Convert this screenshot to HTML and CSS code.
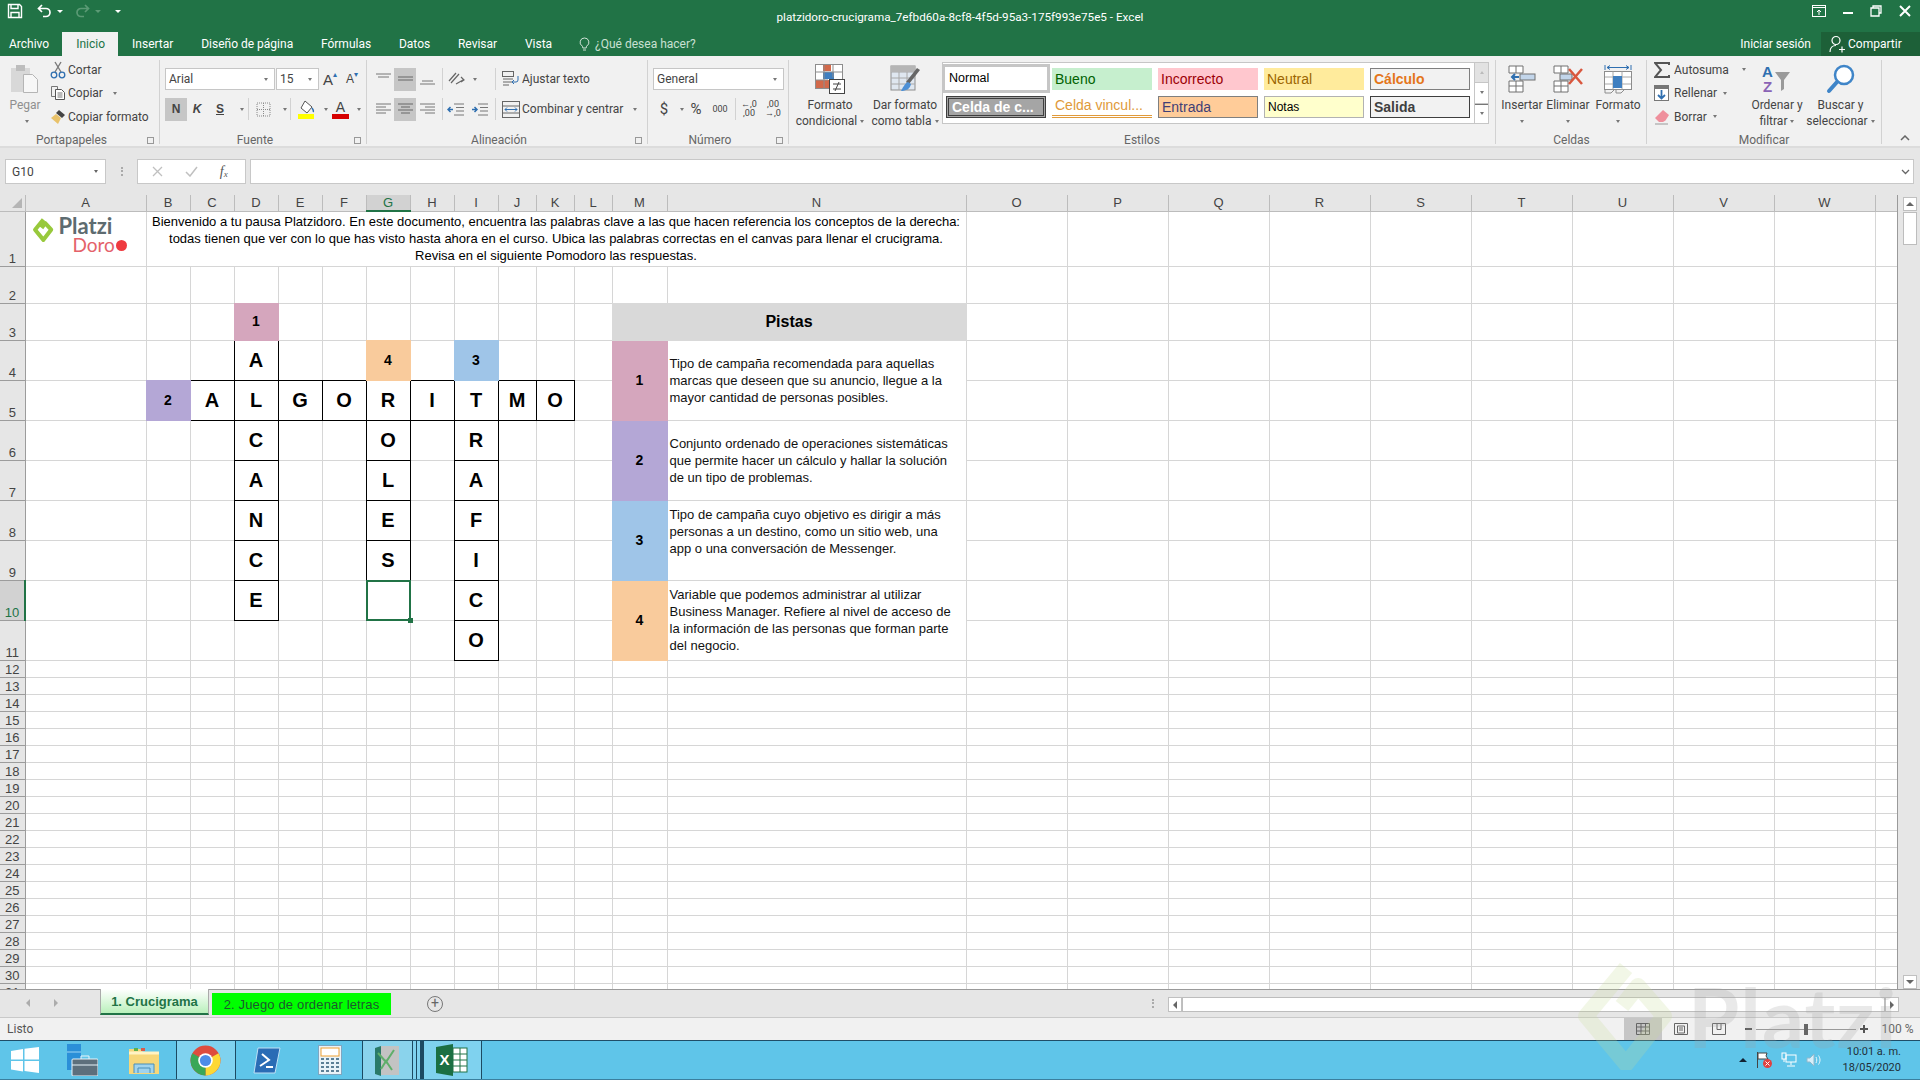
FILE: index.html
```html
<!DOCTYPE html>
<html lang="es">
<head>
<meta charset="utf-8">
<title>platzidoro-crucigrama - Excel</title>
<link rel="stylesheet" href="styles.css">
</head>
<body>
<div class="app">
  <header class="titlebar">
    <div class="qat">
      <svg class="ic-save" width="16" height="16" viewBox="0 0 16 16"><path d="M1.500 1.500h11l2 2v11h-13z" fill="none" stroke="#fff" stroke-width="1.400"/><path d="M4 1.500v4h7v-4M4 14.500v-5h8v5" fill="none" stroke="#fff" stroke-width="1.400"/></svg>
      <svg class="ic-undo" width="15" height="14" viewBox="0 0 15 14"><path d="M5 1L1.500 4.500 5 8M2 4.500h7a4 4 0 0 1 0 8H6" fill="none" stroke="#fff" stroke-width="1.700"/></svg>
      <span class="qcaret"></span>
      <svg class="ic-redo" width="15" height="14" viewBox="0 0 15 14"><path d="M10 1l3.500 3.500L10 8M13 4.500H6a4 4 0 0 0 0 8h3" fill="none" stroke="#5b9a75" stroke-width="1.700"/></svg>
      <span class="qcaret dim"></span>
      <span class="qcaret more"></span>
    </div>
    <div class="doc-title">platzidoro-crucigrama_7efbd60a-8cf8-4f5d-95a3-175f993e75e5 - Excel</div>
    <div class="winctl">
      <svg width="14" height="12" viewBox="0 0 14 12"><rect x=".5" y=".5" width="13" height="11" fill="none" stroke="#fff"/><path d="M1 2.500h12M7 10V5M5 7l2-2 2 2" fill="none" stroke="#fff"/></svg>
      <svg width="10" height="12" viewBox="0 0 10 12"><path d="M0 8h10" stroke="#fff" stroke-width="2"/></svg>
      <svg width="12" height="12" viewBox="0 0 12 12"><path d="M3 3V1h8v7H9M1 3h8v8H1z" fill="none" stroke="#fff" stroke-width="1.300"/></svg>
      <svg width="12" height="12" viewBox="0 0 12 12"><path d="M1 1l10 10M11 1L1 11" stroke="#fff" stroke-width="2"/></svg>
    </div>
  </header>

  <nav class="tabsrow">
    <span class="tab file">Archivo</span>
    <span class="tab active">Inicio</span>
    <span class="tab">Insertar</span>
    <span class="tab">Diseño de página</span>
    <span class="tab">Fórmulas</span>
    <span class="tab">Datos</span>
    <span class="tab">Revisar</span>
    <span class="tab">Vista</span>
    <span class="tell">
      <svg width="11" height="15" viewBox="0 0 11 15"><path d="M5.500 1a4.300 4.300 0 0 0-2.300 8c.500.400.500 1 .6 2h3.400c.100-1 .100-1.600.6-2a4.300 4.300 0 0 0-2.300-8zM4 13h3" fill="none" stroke="#cfe2d6"/></svg>
      ¿Qué desea hacer?
    </span>
    <span class="signin">Iniciar sesión</span>
    <span class="share">
      <svg width="16" height="18" viewBox="0 0 16 18"><circle cx="7" cy="5.500" r="4" fill="none" stroke="#fff" stroke-width="1.200"/><path d="M1 17c0-4 2.500-6.500 6-6.500M10 14.500h6M13 11.500v6" fill="none" stroke="#fff" stroke-width="1.200"/></svg>
      Compartir
    </span>
  </nav>

  <section class="ribbon">
    <div class="group g-clip">
      <div class="g-body">
        <div class="big w50 faded">
          <svg class="big-ic" width="30" height="30" viewBox="0 0 30 30"><rect x="1" y="4" width="19" height="24" fill="#d8d8d8"/><rect x="6" y="1" width="9" height="6" fill="#bdbdbd"/><path d="M13.500 10.500h9l5 5v13h-14z" fill="#f7f7f7" stroke="#b5b5b5"/></svg>
          <span class="bl">Pegar</span>
          <span class="bl"><i class="caret"></i></span>
        </div>
        <div class="stack3">
          <div class="srow"><svg width="16" height="18" viewBox="0 0 16 18"><path d="M5 1l6 10M11 1L5 11" stroke="#7a7a7a" stroke-width="1.400" fill="none"/><circle cx="4" cy="14" r="2.800" fill="none" stroke="#2f6fb0" stroke-width="1.300"/><circle cx="12" cy="14" r="2.800" fill="none" stroke="#2f6fb0" stroke-width="1.300"/></svg>Cortar</div>
          <div class="srow"><svg width="16" height="16" viewBox="0 0 16 16"><path d="M1.500 1.500h6v3M1.500 1.500v10h4" fill="none" stroke="#777"/><path d="M5.500 4.500h6l3 3v7h-9z" fill="#fff" stroke="#555"/><path d="M7.500 8h5M7.500 10h5M7.500 12h5" stroke="#777"/></svg>Copiar<i class="caret sp"></i></div>
          <div class="srow"><svg width="16" height="16" viewBox="0 0 16 16"><path d="M9 1l6 5-3 3-6-5z" fill="#444"/><path d="M6 5l5 4-3 6-7-6z" fill="#e9c26a"/></svg>Copiar formato</div>
        </div>
      </div>
      <div class="g-label lau">Portapapeles<i class="launch"></i></div>
    </div>

    <div class="group g-font">
      <div class="g-body">
        <div class="stack2">
          <div class="row">
            <div class="combo w110">Arial<i class="caret"></i></div>
            <div class="combo w43">15<i class="caret"></i></div>
            <span class="tb w22 glyph">A<sup>▴</sup></span>
            <span class="tb w22 glyph small">A<sup>▾</sup></span>
          </div>
          <div class="row">
            <span class="tb w22 on b">N</span>
            <span class="tb w20 b it">K</span>
            <span class="tb w26 b un">S</span>
            <span class="tb w15"><i class="caret"></i></span>
            <i class="sep"></i>
            <span class="tb w28"><svg width="15" height="15" viewBox="0 0 15 15"><path d="M1 1h13v13H1zM7.500 1v13M1 7.500h13" fill="none" stroke="#8a8a8a" stroke-dasharray="1 1"/></svg></span>
            <span class="tb w13"><i class="caret"></i></span>
            <i class="sep"></i>
            <span class="tb w30"><svg width="17" height="19" viewBox="0 0 17 19"><path d="M7 1l7 6-5 6-6-5z" fill="#fff" stroke="#555"/><path d="M14 8c1.500 2 2 3 1 4" stroke="#2f6fb0" stroke-width="1.500" fill="none"/><rect y="14" width="16" height="5" fill="#ffff00"/></svg></span>
            <span class="tb w6"><i class="caret"></i></span>
            <span class="tb w26"><svg width="17" height="19" viewBox="0 0 17 19"><text x="8.500" y="12" font-family="Liberation Sans" font-size="14" fill="#444" text-anchor="middle">A</text><rect y="14" width="17" height="5" fill="#d60000"/></svg></span>
            <span class="tb w8"><i class="caret"></i></span>
          </div>
        </div>
      </div>
      <div class="g-label lau">Fuente<i class="launch"></i></div>
    </div>

    <div class="group g-align">
      <div class="g-body">
        <div class="stack2">
          <div class="row">
            <span class="tb w22"><svg width="15" height="12" viewBox="0 0 15 12"><path d="M0 1h15M2 4h11" stroke="#777"/></svg></span>
            <span class="tb w22 on"><svg width="15" height="12" viewBox="0 0 15 12"><path d="M0 4h15M0 7h15" stroke="#666"/></svg></span>
            <span class="tb w22"><svg width="15" height="12" viewBox="0 0 15 12"><path d="M2 8h11M0 11h15" stroke="#777"/></svg></span>
            <span class="tb w4"></span>
            <i class="sep"></i>
            <span class="tb w26"><svg width="18" height="16" viewBox="0 0 18 16"><path d="M2 10l7-8M4 12l8-9M9 13l7-4M14 6l3 3-3 2" fill="none" stroke="#666" stroke-width="1.200"/></svg></span>
            <span class="tb w8"><i class="caret"></i></span>
            <span class="tb w18"></span>
            <i class="sep"></i>
            <span class="tb w6"></span>
            <span class="tb w18"><svg width="18" height="17" viewBox="0 0 18 17"><rect x=".5" y=".5" width="11" height="5" fill="none" stroke="#666"/><path d="M1 8h10M1 11h10M1 14h6" stroke="#666"/><path d="M16 5v4a2 2 0 0 1-2 2h-4M12 9l-2 2 2 2" fill="none" stroke="#2f6fb0"/></svg></span>
            <span class="txt">Ajustar texto</span>
          </div>
          <div class="row">
            <span class="tb w22"><svg width="15" height="12" viewBox="0 0 15 12"><path d="M0 1h15M0 4h10M0 7h15M0 10h10" stroke="#777"/></svg></span>
            <span class="tb w22 on"><svg width="15" height="12" viewBox="0 0 15 12"><path d="M0 1h15M3 4h9M0 7h15M3 10h9" stroke="#666"/></svg></span>
            <span class="tb w22"><svg width="15" height="12" viewBox="0 0 15 12"><path d="M0 1h15M5 4h10M0 7h15M5 10h10" stroke="#777"/></svg></span>
            <span class="tb w4"></span>
            <i class="sep"></i>
            <span class="tb w24"><svg width="17" height="13" viewBox="0 0 17 13"><path d="M7 1h10M9 4.500h8M9 8h8M7 12h10" stroke="#777"/><path d="M6 6.500H1M3.500 4l-2.500 2.500L3.500 9" fill="none" stroke="#2f6fb0" stroke-width="1.500"/></svg></span>
            <span class="tb w24"><svg width="17" height="13" viewBox="0 0 17 13"><path d="M7 1h10M9 4.500h8M9 8h8M7 12h10" stroke="#777"/><path d="M1 6.500h5M3.500 4L6 6.500 3.500 9" fill="none" stroke="#2f6fb0" stroke-width="1.500"/></svg></span>
            <span class="tb w4"></span>
            <i class="sep"></i>
            <span class="tb w6"></span>
            <span class="tb w18"><svg width="18" height="17" viewBox="0 0 18 17"><rect x=".5" y=".5" width="17" height="16" fill="none" stroke="#666"/><path d="M1 5h16M1 12h16" stroke="#666"/><path d="M3 8.500h12M3 8.500l2-2M3 8.500l2 2M15 8.500l-2-2M15 8.500l-2 2" stroke="#2f6fb0" fill="none"/></svg></span>
            <span class="txt">Combinar y centrar</span>
            <i class="caret sp2"></i>
          </div>
        </div>
      </div>
      <div class="g-label lau">Alineación<i class="launch"></i></div>
    </div>

    <div class="group g-num">
      <div class="g-body">
        <div class="stack2">
          <div class="row"><div class="combo w130">General<i class="caret"></i></div></div>
          <div class="row">
            <span class="tb w22 numsym">$</span>
            <span class="tb w10"><i class="caret"></i></span>
            <span class="tb w22 numsym">%</span>
            <span class="tb w26 tiny">000</span>
            <span class="tb w2"></span>
            <i class="sep"></i>
            <span class="tb w26 tiny stackd"><b>←,0</b><b>,00</b></span>
            <span class="tb w22 tiny stackd"><b>,00</b><b>→,0</b></span>
          </div>
        </div>
      </div>
      <div class="g-label lau">Número<i class="launch"></i></div>
    </div>

    <div class="group g-styles">
      <div class="g-body">
        <div class="big w76">
          <svg class="big-ic" width="30" height="30" viewBox="0 0 30 30"><g fill="#fff" stroke="#8d8d8d"><rect x=".5" y=".5" width="27" height="24"/></g><rect x="8" y="1" width="8" height="6" fill="#d2694a"/><rect x="8" y="8" width="11" height="7" fill="#3f7fc0"/><rect x="1" y="16" width="14" height="8" fill="#d2694a"/><path d="M9 .5v24M18 .5v13M1 8h26M1 16h12" stroke="#8d8d8d" fill="none"/><rect x="14.500" y="15.500" width="15" height="14" fill="#fff" stroke="#444"/><path d="M18 20h8M18 25h8M24 18l-4 9" stroke="#444"/></svg>
          <span class="bl">Formato</span>
          <span class="bl">condicional<i class="caret"></i></span>
        </div>
        <div class="big w74">
          <svg class="big-ic" width="30" height="30" viewBox="0 0 30 30"><rect x="1" y="2" width="24" height="24" fill="#dfe7f0" stroke="#8d8d8d"/><path d="M1 8h24M1 14h24M1 20h24M9 2v24M17 2v24" stroke="#a8a8a8"/><rect x="1" y="2" width="24" height="6" fill="#b5b5b5"/><path d="M30 6L19 20l-3-2L27 4z" fill="#666"/><path d="M18 18c-4 2-5 6-7 9 5 0 9-2 10-7z" fill="#4d90d6"/></svg>
          <span class="bl">Dar formato</span>
          <span class="bl">como tabla<i class="caret"></i></span>
        </div>
        <div class="gallery">
          <span class="sty s-normal">Normal</span>
          <span class="sty s-good">Bueno</span>
          <span class="sty s-bad">Incorrecto</span>
          <span class="sty s-neutral">Neutral</span>
          <span class="sty s-calc">Cálculo</span>
          <span class="sty s-check">Celda de c...</span>
          <span class="sty s-link">Celda vincul...</span>
          <span class="sty s-input">Entrada</span>
          <span class="sty s-note">Notas</span>
          <span class="sty s-out">Salida</span>
        </div>
        <div class="galscroll">
          <span class="up"><i class="caret rev"></i></span>
          <span><i class="caret"></i></span>
          <span class="more"><i class="caret"></i></span>
        </div>
      </div>
      <div class="g-label">Estilos</div>
    </div>

    <div class="group g-cells">
      <div class="g-body">
        <div class="big w50">
          <svg class="big-ic" width="28" height="28" viewBox="0 0 28 28"><path d="M1 1h14v7H1zM8 1v7M1 16h14v11H1zM8 16v11M1 21h14" fill="#fff" stroke="#707070"/><path d="M11 12H4M7 9l-3 3 3 3" fill="none" stroke="#2f6fb0" stroke-width="2"/><rect x="12" y="9" width="15" height="6" fill="#c2d5ea" stroke="#707070"/></svg>
          <span class="bl">Insertar</span>
          <span class="bl"><i class="caret"></i></span>
        </div>
        <div class="big w42">
          <svg class="big-ic" width="30" height="28" viewBox="0 0 30 28"><path d="M1 1h14v7H1zM8 1v7M1 16h14v11H1zM8 16v11M1 21h14" fill="#fff" stroke="#707070"/><rect x="7" y="9" width="12" height="6" fill="#c2d5ea" stroke="#707070"/><path d="M16 4l13 15M29 4L16 19" stroke="#d9573e" stroke-width="2.500"/></svg>
          <span class="bl">Eliminar</span>
          <span class="bl"><i class="caret"></i></span>
        </div>
        <div class="big w58">
          <svg class="big-ic" width="28" height="30" viewBox="0 0 28 30"><path d="M1 1v5M27 1v5M3 3.500h22M3 3.500l3-2M3 3.500l3 2M25 3.500l-3-2M25 3.500l-3 2" stroke="#2f6fb0" fill="none"/><rect x=".5" y="7.500" width="27" height="18" fill="#fff" stroke="#8d8d8d"/><path d="M9 7.500v18M18 7.500v18M1 13h26M1 20h26" stroke="#a8a8a8"/><rect x="9" y="12" width="9" height="12" fill="#3f7fc0"/><path d="M1 26v3h6l3-3M12 26v3h5l3-3" fill="none" stroke="#8d8d8d"/></svg>
          <span class="bl">Formato</span>
          <span class="bl"><i class="caret"></i></span>
        </div>
      </div>
      <div class="g-label">Celdas</div>
    </div>

    <div class="group g-edit">
      <div class="g-body">
        <div class="stack3 w108 mod">
          <div class="srow"><svg width="16" height="16" viewBox="0 0 16 16"><path d="M15 3V1H1l6 7-6 7h14v-2" fill="none" stroke="#555" stroke-width="2"/></svg>Autosuma<i class="caret sp3"></i></div>
          <div class="srow"><svg width="16" height="16" viewBox="0 0 16 16"><rect x=".5" y=".5" width="14" height="15" fill="#fff" stroke="#777"/><rect x="1" y="1" width="13" height="3" fill="#777"/><path d="M7.500 5v8M4 10l3.500 3.500L11 10" fill="none" stroke="#2f6fb0" stroke-width="1.800"/></svg>Rellenar<i class="caret"></i></div>
          <div class="srow"><svg width="16" height="16" viewBox="0 0 16 16"><path d="M9 1l6 5-3.500 5.500-2.500 1.500H5L1 9z" fill="#ef8f9c"/><path d="M1 15h13" stroke="#999"/></svg>Borrar<i class="caret"></i></div>
        </div>
        <div class="big w44">
          <svg class="big-ic" width="30" height="30" viewBox="0 0 30 30"><text x="0" y="13" font-family="Liberation Sans" font-size="15" font-weight="700" fill="#2f6fb0">A</text><text x="1" y="28" font-family="Liberation Sans" font-size="15" font-weight="700" fill="#8a63b5">Z</text><path d="M13 8h15l-6 8v9l-3 2V16z" fill="#9a9a9a"/></svg>
          <span class="bl">Ordenar y</span>
          <span class="bl">filtrar<i class="caret"></i></span>
        </div>
        <div class="big w83">
          <svg class="big-ic" width="30" height="30" viewBox="0 0 30 30"><circle cx="18" cy="11" r="9" fill="#fff" stroke="#3f85c8" stroke-width="2.500"/><path d="M11 18L3 27" stroke="#3f85c8" stroke-width="4" stroke-linecap="round"/></svg>
          <span class="bl">Buscar y</span>
          <span class="bl">seleccionar<i class="caret"></i></span>
        </div>
      </div>
      <div class="g-label">Modificar</div>
    </div>
    <div class="collapse"><svg width="10" height="6" viewBox="0 0 10 6"><path d="M1 5l4-4 4 4" fill="none" stroke="#666" stroke-width="1.500"/></svg></div>
  </section>

  <section class="fbar">
    <div class="namebox">G10<i class="caret dark"></i></div>
    <div class="fdots"></div>
    <div class="fbtns">
      <svg width="11" height="11" viewBox="0 0 11 11"><path d="M1 1l9 9M10 1l-9 9" stroke="#c0c0c0" stroke-width="1.300"/></svg>
      <svg width="13" height="11" viewBox="0 0 13 11"><path d="M1 6l4 4 7-9" fill="none" stroke="#c0c0c0" stroke-width="1.500"/></svg>
      <span class="fx">f<sub>x</sub></span>
    </div>
    <div class="finput"><svg width="9" height="6" viewBox="0 0 9 6"><path d="M1 1l3.500 3.500L8 1" fill="none" stroke="#666" stroke-width="1.300"/></svg></div>
  </section>

  <main class="sheet">
    <div class="gridwrap">
      <table class="grid">
        <colgroup>
          <col class="c-h"><col class="c-a"><col class="c-b"><col class="c-b"><col class="c-b"><col class="c-b"><col class="c-b"><col class="c-b"><col class="c-b"><col class="c-b"><col class="c-j"><col class="c-j"><col class="c-j"><col class="c-m"><col class="c-n"><col class="c-o"><col class="c-o"><col class="c-o"><col class="c-o"><col class="c-o"><col class="c-o"><col class="c-o"><col class="c-o"><col class="c-o"><col class="c-x">
        </colgroup>
        <thead>
          <tr class="rh"><th class="corner"><i></i></th><th>A</th><th>B</th><th>C</th><th>D</th><th>E</th><th>F</th><th class="hsel">G</th><th>H</th><th>I</th><th>J</th><th>K</th><th>L</th><th>M</th><th>N</th><th>O</th><th>P</th><th>Q</th><th>R</th><th>S</th><th>T</th><th>U</th><th>V</th><th>W</th><th></th></tr>
        </thead>
        <tbody>
          <tr class="r55"><th>1</th><td><div class="logo"><svg width="24" height="31" viewBox="0 0 20 26"><path d="M9.500 3L2.500 11.500l7 8.500 6.500-8.500-5-5.500-3 4" fill="none" stroke="#98c93c" stroke-width="3.400" stroke-linejoin="round"/></svg><div class="logotxt"><span class="lp">Platzi</span><span class="ld">Doro<i class="tomato"></i></span></div></div></td><td colspan="13" class="intro">Bienvenido a tu pausa Platzidoro. En este documento, encuentra las palabras clave a las que hacen referencia los conceptos de la derecha:<br>todas tienen que ver con lo que has visto hasta ahora en el curso. Ubica las palabras correctas en el canvas para llenar el crucigrama.<br>Revisa en el siguiente Pomodoro las respuestas.</td><td></td><td></td><td></td><td></td><td></td><td></td><td></td><td></td><td></td><td></td></tr>
          <tr class="r37"><th>2</th><td></td><td></td><td></td><td></td><td></td><td></td><td></td><td></td><td></td><td></td><td></td><td></td><td></td><td></td><td></td><td></td><td></td><td></td><td></td><td></td><td></td><td></td><td></td><td></td></tr>
          <tr class="r37"><th>3</th><td></td><td></td><td></td><td class="num pink">1</td><td></td><td></td><td></td><td></td><td></td><td></td><td></td><td></td><td colspan="2" class="pistas">Pistas</td><td></td><td></td><td></td><td></td><td></td><td></td><td></td><td></td><td></td><td></td></tr>
          <tr class="r40"><th>4</th><td></td><td></td><td></td><td class="l">A</td><td></td><td></td><td class="num orange">4</td><td></td><td class="num blue">3</td><td></td><td></td><td></td><td rowspan="2" class="num pink">1</td><td rowspan="2" class="clue">Tipo de campaña recomendada para aquellas<br>marcas que deseen que su anuncio, llegue a la<br>mayor cantidad de personas posibles.</td><td></td><td></td><td></td><td></td><td></td><td></td><td></td><td></td><td></td><td></td></tr>
          <tr class="r40"><th>5</th><td></td><td class="num purple">2</td><td class="l">A</td><td class="l">L</td><td class="l">G</td><td class="l">O</td><td class="l">R</td><td class="l">I</td><td class="l">T</td><td class="l">M</td><td class="l">O</td><td></td><td></td><td></td><td></td><td></td><td></td><td></td><td></td><td></td><td></td><td></td></tr>
          <tr class="r40"><th>6</th><td></td><td></td><td></td><td class="l">C</td><td></td><td></td><td class="l">O</td><td></td><td class="l">R</td><td></td><td></td><td></td><td rowspan="2" class="num purple">2</td><td rowspan="2" class="clue">Conjunto ordenado de operaciones sistemáticas<br>que permite hacer un cálculo y hallar la solución<br>de un tipo de problemas.</td><td></td><td></td><td></td><td></td><td></td><td></td><td></td><td></td><td></td><td></td></tr>
          <tr class="r40"><th>7</th><td></td><td></td><td></td><td class="l">A</td><td></td><td></td><td class="l">L</td><td></td><td class="l">A</td><td></td><td></td><td></td><td></td><td></td><td></td><td></td><td></td><td></td><td></td><td></td><td></td><td></td></tr>
          <tr class="r40"><th>8</th><td></td><td></td><td></td><td class="l">N</td><td></td><td></td><td class="l">E</td><td></td><td class="l">F</td><td></td><td></td><td></td><td rowspan="2" class="num blue">3</td><td rowspan="2" class="clue">Tipo de campaña cuyo objetivo es dirigir a más<br>personas a un destino, como un sitio web, una<br>app o una conversación de Messenger.<br>&nbsp;</td><td></td><td></td><td></td><td></td><td></td><td></td><td></td><td></td><td></td><td></td></tr>
          <tr class="r40"><th>9</th><td></td><td></td><td></td><td class="l">C</td><td></td><td></td><td class="l">S</td><td></td><td class="l">I</td><td></td><td></td><td></td><td></td><td></td><td></td><td></td><td></td><td></td><td></td><td></td><td></td><td></td></tr>
          <tr class="r40"><th class="vsel">10</th><td></td><td></td><td></td><td class="l">E</td><td></td><td></td><td class="selcell"></td><td></td><td class="l">C</td><td></td><td></td><td></td><td rowspan="2" class="num orange">4</td><td rowspan="2" class="clue">Variable que podemos administrar al utilizar<br>Business Manager. Refiere al nivel de acceso de<br>la información de las personas que forman parte<br>del negocio.</td><td></td><td></td><td></td><td></td><td></td><td></td><td></td><td></td><td></td><td></td></tr>
          <tr class="r40"><th>11</th><td></td><td></td><td></td><td></td><td></td><td></td><td></td><td></td><td class="l">O</td><td></td><td></td><td></td><td></td><td></td><td></td><td></td><td></td><td></td><td></td><td></td><td></td><td></td></tr>
          <tr class="r17"><th>12</th><td></td><td></td><td></td><td></td><td></td><td></td><td></td><td></td><td></td><td></td><td></td><td></td><td></td><td></td><td></td><td></td><td></td><td></td><td></td><td></td><td></td><td></td><td></td><td></td></tr>
          <tr class="r17"><th>13</th><td></td><td></td><td></td><td></td><td></td><td></td><td></td><td></td><td></td><td></td><td></td><td></td><td></td><td></td><td></td><td></td><td></td><td></td><td></td><td></td><td></td><td></td><td></td><td></td></tr>
          <tr class="r17"><th>14</th><td></td><td></td><td></td><td></td><td></td><td></td><td></td><td></td><td></td><td></td><td></td><td></td><td></td><td></td><td></td><td></td><td></td><td></td><td></td><td></td><td></td><td></td><td></td><td></td></tr>
          <tr class="r17"><th>15</th><td></td><td></td><td></td><td></td><td></td><td></td><td></td><td></td><td></td><td></td><td></td><td></td><td></td><td></td><td></td><td></td><td></td><td></td><td></td><td></td><td></td><td></td><td></td><td></td></tr>
          <tr class="r17"><th>16</th><td></td><td></td><td></td><td></td><td></td><td></td><td></td><td></td><td></td><td></td><td></td><td></td><td></td><td></td><td></td><td></td><td></td><td></td><td></td><td></td><td></td><td></td><td></td><td></td></tr>
          <tr class="r17"><th>17</th><td></td><td></td><td></td><td></td><td></td><td></td><td></td><td></td><td></td><td></td><td></td><td></td><td></td><td></td><td></td><td></td><td></td><td></td><td></td><td></td><td></td><td></td><td></td><td></td></tr>
          <tr class="r17"><th>18</th><td></td><td></td><td></td><td></td><td></td><td></td><td></td><td></td><td></td><td></td><td></td><td></td><td></td><td></td><td></td><td></td><td></td><td></td><td></td><td></td><td></td><td></td><td></td><td></td></tr>
          <tr class="r17"><th>19</th><td></td><td></td><td></td><td></td><td></td><td></td><td></td><td></td><td></td><td></td><td></td><td></td><td></td><td></td><td></td><td></td><td></td><td></td><td></td><td></td><td></td><td></td><td></td><td></td></tr>
          <tr class="r17"><th>20</th><td></td><td></td><td></td><td></td><td></td><td></td><td></td><td></td><td></td><td></td><td></td><td></td><td></td><td></td><td></td><td></td><td></td><td></td><td></td><td></td><td></td><td></td><td></td><td></td></tr>
          <tr class="r17"><th>21</th><td></td><td></td><td></td><td></td><td></td><td></td><td></td><td></td><td></td><td></td><td></td><td></td><td></td><td></td><td></td><td></td><td></td><td></td><td></td><td></td><td></td><td></td><td></td><td></td></tr>
          <tr class="r17"><th>22</th><td></td><td></td><td></td><td></td><td></td><td></td><td></td><td></td><td></td><td></td><td></td><td></td><td></td><td></td><td></td><td></td><td></td><td></td><td></td><td></td><td></td><td></td><td></td><td></td></tr>
          <tr class="r17"><th>23</th><td></td><td></td><td></td><td></td><td></td><td></td><td></td><td></td><td></td><td></td><td></td><td></td><td></td><td></td><td></td><td></td><td></td><td></td><td></td><td></td><td></td><td></td><td></td><td></td></tr>
          <tr class="r17"><th>24</th><td></td><td></td><td></td><td></td><td></td><td></td><td></td><td></td><td></td><td></td><td></td><td></td><td></td><td></td><td></td><td></td><td></td><td></td><td></td><td></td><td></td><td></td><td></td><td></td></tr>
          <tr class="r17"><th>25</th><td></td><td></td><td></td><td></td><td></td><td></td><td></td><td></td><td></td><td></td><td></td><td></td><td></td><td></td><td></td><td></td><td></td><td></td><td></td><td></td><td></td><td></td><td></td><td></td></tr>
          <tr class="r17"><th>26</th><td></td><td></td><td></td><td></td><td></td><td></td><td></td><td></td><td></td><td></td><td></td><td></td><td></td><td></td><td></td><td></td><td></td><td></td><td></td><td></td><td></td><td></td><td></td><td></td></tr>
          <tr class="r17"><th>27</th><td></td><td></td><td></td><td></td><td></td><td></td><td></td><td></td><td></td><td></td><td></td><td></td><td></td><td></td><td></td><td></td><td></td><td></td><td></td><td></td><td></td><td></td><td></td><td></td></tr>
          <tr class="r17"><th>28</th><td></td><td></td><td></td><td></td><td></td><td></td><td></td><td></td><td></td><td></td><td></td><td></td><td></td><td></td><td></td><td></td><td></td><td></td><td></td><td></td><td></td><td></td><td></td><td></td></tr>
          <tr class="r17"><th>29</th><td></td><td></td><td></td><td></td><td></td><td></td><td></td><td></td><td></td><td></td><td></td><td></td><td></td><td></td><td></td><td></td><td></td><td></td><td></td><td></td><td></td><td></td><td></td><td></td></tr>
          <tr class="r17"><th>30</th><td></td><td></td><td></td><td></td><td></td><td></td><td></td><td></td><td></td><td></td><td></td><td></td><td></td><td></td><td></td><td></td><td></td><td></td><td></td><td></td><td></td><td></td><td></td><td></td></tr>
          <tr class="r17"><th>31</th><td></td><td></td><td></td><td></td><td></td><td></td><td></td><td></td><td></td><td></td><td></td><td></td><td></td><td></td><td></td><td></td><td></td><td></td><td></td><td></td><td></td><td></td><td></td><td></td></tr>
        </tbody>
      </table>
    </div>
    <div class="vscroll">
      <span class="sbtn"><i class="tri up"></i></span>
      <span class="vthumb"></span>
      <span class="vspace"></span>
      <span class="sbtn"><i class="tri dn"></i></span>
    </div>
  </main>

  <section class="sheettabs">
    <div class="tabnav"><i class="tri lf"></i><i class="tri rt"></i></div>
    <span class="stab s1">1. Crucigrama</span>
    <span class="stab s2">2. Juego de ordenar letras</span>
    <span class="addsheet">+</span>
    <span class="hdots"></span>
    <div class="hscroll">
      <span class="sbtn"><i class="tri lf"></i></span>
      <span class="hthumb"></span>
      <span class="sbtn"><i class="tri rt"></i></span>
    </div>
  </section>

  <footer class="status">
    <span class="ready">Listo</span>
    <div class="views">
      <span class="vbtn on"><svg width="14" height="12" viewBox="0 0 14 12"><path d="M.5.500h13v11H.5zM5 .5v11M9.500.500v11M.5 4h13M.5 8h13" fill="none" stroke="#666"/></svg></span>
      <span class="vbtn"><svg width="14" height="12" viewBox="0 0 14 12"><path d="M.5.500h13v11H.5z" fill="none" stroke="#666"/><path d="M3.500 3h7v7h-7zM5 5h4M5 7h4" fill="none" stroke="#666"/></svg></span>
      <span class="vbtn"><svg width="14" height="12" viewBox="0 0 14 12"><path d="M.5.500h13v11H.5zM5 .5v6h4v-6" fill="none" stroke="#666"/></svg></span>
    </div>
    <div class="zoomctl">
      <i class="zm"></i>
      <span class="zline"><i class="zthumb"></i></span>
      <i class="zp"></i>
    </div>
    <span class="zpct">100 %</span>
  </footer>

  <footer class="taskbar">
    <span class="tk start"><svg width="28" height="26" viewBox="0 0 28 26"><path d="M0 4l12-2v10.500H0zM13.500 1.800L28 0v12.500H13.500zM0 14h12v10.500l-12-2zM13.500 14H28v12l-14.500-2z" fill="#fff"/></svg></span>
    <span class="tk srv"><svg width="32" height="32" viewBox="0 0 32 32"><rect x="1" y="0" width="14" height="26" fill="#2b8fd8"/><path d="M1 8h14" stroke="#9fd6f5"/><rect x="6" y="15" width="26" height="17" rx="1" fill="#5d6f7c" stroke="#e8f4fa"/><path d="M15 15v-3h8v3M6 21h26" fill="none" stroke="#e8f4fa"/></svg></span>
    <span class="tk exp"><svg width="32" height="30" viewBox="0 0 32 30"><path d="M1 4h11l3 3h16v22H1z" fill="#f6d77a"/><path d="M1 8h30" stroke="#fff3c4" stroke-width="3"/><rect x="6" y="3" width="4" height="3" fill="#5bb04c"/><rect x="13" y="3" width="4" height="3" fill="#d85a4a"/><path d="M6 28V19h20v9M10 28v-5h12v5" fill="#9fd3ee" stroke="#4a8fb8"/></svg></span>
    <span class="tk active chrome"><svg width="31" height="31" viewBox="0 0 32 32"><circle cx="16" cy="16" r="15.500" fill="#dd4b3e"/><path d="M16 16L29.500 8.500A15.500 15.500 0 0 1 16 31.500z" fill="#fdd835"/><path d="M16 16L16 31.500A15.500 15.500 0 0 1 2.500 8.500z" fill="#3aa757"/><circle cx="16" cy="16" r="7.500" fill="#fff"/><circle cx="16" cy="16" r="5.800" fill="#4d8ce8"/></svg></span>
    <span class="tk ps"><svg width="28" height="28" viewBox="0 0 28 28"><path d="M5 2h22l-5 25H1z" fill="#2a6cb5" stroke="#bfe0f5"/><path d="M9 8l7 6-9 6M13 21h7" fill="none" stroke="#fff" stroke-width="2"/></svg></span>
    <span class="tk calc"><svg width="24" height="30" viewBox="0 0 24 30"><rect x=".5" y=".5" width="23" height="29" fill="#e9f2f8" stroke="#7fa6c0"/><rect x="3" y="3" width="18" height="8" fill="#fff" stroke="#f0a030"/><path d="M3 14h3M8 14h3M13 14h3M18 14h3M3 18h3M8 18h3M13 18h3M18 18h3M3 22h3M8 22h3M13 22h3M18 22h3M3 26h3M8 26h3M13 26h3M18 26h3" stroke="#5c7f96" stroke-width="2"/></svg></span>
    <span class="tk active app16"><svg width="24" height="31" viewBox="0 0 24 31"><rect x="6" y="1" width="18" height="29" fill="#c3c3c3"/><path d="M6 1L0 3v26l6 2z" fill="#2a7a68"/><path d="M3 8l8 9 8-12M6 24l5-8 6 9" fill="none" stroke="#5fae6a" stroke-width="2"/></svg></span>
    <span class="tkstack"></span>
    <span class="tk active excel"><svg width="32" height="32" viewBox="0 0 32 32"><rect x="12" y="4" width="19" height="24" fill="#fff" stroke="#217346"/><path d="M17 4v24M24 4v24M12 10h19M12 16h19M12 22h19" stroke="#217346"/><path d="M0 3l17-3v32L0 29z" fill="#1b6f43"/><text x="8.500" y="21" font-family="Liberation Sans" font-size="15" font-weight="700" fill="#fff" text-anchor="middle">X</text></svg></span>
    <div class="tray">
      <i class="traycaret"></i>
      <svg width="16" height="16" viewBox="0 0 16 16"><path d="M1.500 0v16M2 1h9l-1 3 2 3H2z" fill="#fff" stroke="#444"/><circle cx="11.500" cy="11.500" r="4.500" fill="#e04040"/><path d="M9.500 9.500l4 4M13.500 9.500l-4 4" stroke="#fff"/></svg>
      <svg width="16" height="16" viewBox="0 0 16 16"><rect x="5" y="3" width="10" height="7" fill="none" stroke="#fff"/><rect x="1" y="1" width="4" height="6" fill="none" stroke="#fff"/><path d="M3 7v3M10 10v3M6 14h8" stroke="#fff"/></svg>
      <svg width="16" height="16" viewBox="0 0 16 16"><path d="M1 6h3l4-4v12l-4-4H1z" fill="#d8eef8" stroke="#8fb8cc"/><path d="M10 5c1 2 1 4 0 6M12.500 3.500c2 3 2 6 0 9" fill="none" stroke="#e8f6fc"/></svg>
      <div class="clock"><span>10:01 a. m.</span><span>18/05/2020</span></div>
    </div>
  </footer>

  <div class="watermark">
    <svg width="96" height="108" viewBox="0 0 96 108"><path d="M48 6L8 54l40 48 38-48-26-30-16 20" fill="none" stroke="#c8dc96" stroke-width="16" stroke-linejoin="round"/></svg>
    <span>Platzi</span>
  </div>
</div>
</body>
</html>
```
FILE: styles.css
```css
*{box-sizing:border-box}
html,body{margin:0;padding:0;height:100%;overflow:hidden;background:#fff}
body{font-family:Roboto,"Liberation Sans",sans-serif;font-size:12px;color:#444}
i{font-style:normal}
.app{position:relative;width:1920px;height:1080px;display:flex;flex-direction:column;overflow:hidden}

/* title bar */
.titlebar{height:32px;background:#217346;color:#fff;display:grid;grid-template-columns:1fr auto 1fr;align-items:start}
.qat{display:flex;align-items:center;height:22px;padding-left:7px}
.ic-undo{margin-left:14px}
.ic-redo{margin-left:12px}
.qcaret{width:0;height:0;border:3px solid transparent;border-top-color:#fff;border-bottom:0;margin-left:5px}
.qcaret.dim{border-top-color:#5b9a75}
.qcaret.more{margin-left:14px}
.doc-title{height:22px;padding-top:9px;line-height:16px;font-size:11.700px;color:#fff}
.winctl{display:flex;align-items:center;justify-content:flex-end;gap:17px;height:22px;padding-right:9px}

/* tabs */
.tabsrow{height:24px;background:#217346;color:#fff;display:flex;align-items:stretch;line-height:24px}
.tab{padding:0 13.900px;white-space:nowrap}
.tab.file{padding:0 13px 0 9px}
.tab.active{background:#f1f1f1;color:#217346;padding:0 14px;line-height:24px;width:56px}
.tell{display:flex;align-items:center;gap:5px;margin-left:13px;color:#c9e0d2}
.signin{margin-left:auto;padding-right:10px}
.share{width:99px;background:#1d6038;display:flex;align-items:center;gap:3px;padding-left:8px}

/* ribbon */
.ribbon{height:92px;background:#f1f1f1;display:flex;align-items:flex-start;padding-top:4px;border-bottom:2px solid #dcdcdc}
.group{height:84px;border-right:1px solid #d2d2d2;display:flex;flex-direction:column}
.g-clip{width:160px}.g-font{width:207px}.g-align{width:281px}.g-num{width:141px}.g-styles{width:707px}.g-cells{width:151px;padding-left:1px}.g-edit{width:235px}
.g-body{height:72px;display:flex;flex:none}
.g-label{position:relative;height:16px;line-height:16px;margin-bottom:-4px;text-align:center;color:#666;font-size:12px}
.g-label.lau{padding-right:16px}
.launch{position:absolute;right:5px;top:5px;width:7px;height:7px;border:1px solid #999}
.caret{display:inline-block;width:0;height:0;border:2.500px solid transparent;border-top:3px solid #777;border-bottom:0;margin-left:3px;vertical-align:middle}
.caret.rev{border-top:0;border-bottom:3px solid #bbb}
.caret.sp{margin-left:8px}.caret.sp2{margin-left:10px}.caret.sp3{margin-left:9px}
.caret.dark{border-top-color:#666}

.big{display:flex;flex-direction:column;align-items:center;white-space:nowrap;padding-top:4px;flex:none}
.big-ic{height:33px;padding-bottom:3px;flex:none}
.bl{height:16px;line-height:16px}
.big.faded{color:#8f8f8f}
.w50{width:50px}.w76{width:76px}.w74{width:74px}.w42{width:42px}.w58{width:58px}.w44{width:44px}.w83{width:83px}.w108{width:108px}
.stack3{display:flex;flex-direction:column;margin-top:-2px;flex:none}
.srow{height:23.500px;display:flex;align-items:center;gap:2px;white-space:nowrap}
.srow svg{flex:none}
.srow .caret{margin-left:2px}
.srow .caret.sp{margin-left:8px}
.srow .caret.sp3{margin-left:9px}
.g-edit .stack3{padding-left:7px}
.g-edit .srow{gap:4px}
.stack2{display:flex;flex-direction:column;gap:8px;padding:8px 0 0 5px}
.row{display:flex;align-items:center;height:22px;white-space:nowrap}
.combo{height:22px;background:#fff;border:1px solid #c6c6c6;display:flex;align-items:center;justify-content:space-between;padding:0 6px 0 3px;color:#444}
.w110{width:110px}.w43{width:43px;margin-left:1px}.w130{width:131px}
.tb{display:flex;align-items:center;justify-content:center;height:22px;flex:none;color:#444}
.w2{width:2px}.w4{width:4px}.w6{width:6px}.w8{width:8px}.w10{width:10px}.w13{width:13px}.w15{width:15px}.w18{width:18px}.w20{width:20px}.w22{width:22px}.w24{width:24px}.w26{width:26px}.w28{width:28px}.w30{width:30px}
.tb.on{background:#c6c6c6}
.row .tb.on{height:23px}
.b{font-family:"Liberation Sans",sans-serif;font-weight:700;font-size:12px}
.it{font-style:italic}
.un{text-decoration:underline}
.glyph{font-family:"Liberation Sans",sans-serif;font-size:15px}
.glyph.small{font-size:12px}
.glyph sup{font-size:8px;color:#2f6fb0;margin-top:-8px;line-height:8px}
.sep{width:1px;height:22px;background:#d2d2d2;flex:none}
.txt{margin-left:2px}
.numsym{font-size:15px}
.tiny{font-size:9px;line-height:9px}
.stackd{flex-direction:column}
.stackd b{font-weight:400}

/* styles gallery */
.g-styles .g-body{padding-left:3px}
.gallery{margin-top:2px;width:533px;height:62px;background:#fff;border:1px solid #c6c6c6;padding:5px 3px;display:grid;grid-template-columns:repeat(5,100px);grid-template-rows:22px 22px;column-gap:6px;row-gap:6px;font-family:"Liberation Sans",sans-serif;font-size:14px}
.sty{display:flex;align-items:center;padding:0 0 1px 3px;white-space:nowrap;height:22px}
.s-normal{font-size:12.500px;color:#000;outline:3px solid #c6c6c6;outline-offset:1px;height:21px}
.s-good{background:#c6efce;color:#006100}
.s-bad{background:#ffc7ce;color:#9c0006}
.s-neutral{background:#ffeb9c;color:#9c6500}
.s-calc{background:#f2f2f2;color:#e4761b;border:1px solid #7f7f7f;font-weight:700}
.s-check{background:#a5a5a5;color:#fff;border:3px double #3f3f3f;font-weight:700}
.s-link{color:#e09a3a;border-bottom:3px double #e09a3a}
.s-input{background:#ffcc99;color:#3f3f76;border:1px solid #7f7f7f}
.s-note{background:#ffffcc;color:#000;border:1px solid #b2b2b2;font-size:12px}
.s-out{background:#f2f2f2;color:#3f3f3f;border:1px solid #3f3f3f;font-weight:700}
.galscroll{margin-top:2px;width:14px;height:62px;display:flex;flex-direction:column;border:1px solid #c6c6c6;border-left:0;background:#fff}
.galscroll span{flex:1;display:flex;align-items:center;justify-content:center;border-bottom:1px solid #c6c6c6}
.galscroll span:last-child{border-bottom:0}
.galscroll .up{background:#e2e2e2}
.galscroll .more{box-shadow:inset 0 6px 0 -5px #777}
.galscroll .caret{margin:0}
.g-cells .bl .caret{margin-left:0}
.collapse{margin:70px 0 0 18px}

/* formula bar */
.fbar{height:47px;background:#e6e6e6;display:flex;align-items:flex-start;padding:11px 6px 0 5px}
.namebox{width:101px;height:25px;background:#fff;border:1px solid #c8c8c8;display:flex;align-items:center;justify-content:space-between;padding:0 7px 0 6px;color:#444;font-size:12px}
.fdots{width:2px;height:9px;margin:8px 14px 0 14.500px;border-left:2px dotted #aaa}
.fbtns{width:109px;height:25px;background:#fff;border:1px solid #c8c8c8;display:flex;align-items:center;justify-content:space-around;padding:0 6px 0 4px}
.fx{font-family:"Liberation Serif",serif;font-style:italic;font-size:14px;color:#555}
.fx sub{font-size:9px;vertical-align:-1px}
.finput{flex:1;height:25px;margin-left:4px;background:#fff;border:1px solid #c8c8c8;display:flex;align-items:center;justify-content:flex-end;padding-right:3px}

/* sheet */
.sheet{height:795px;display:flex;background:#e6e6e6;border-bottom:1px solid #9a9a9a}
.gridwrap{width:1898px;overflow:hidden;background:#fff;border-right:1px solid #9a9a9a;flex:none}
.grid{table-layout:fixed;border-collapse:collapse;width:1898px;font-family:"Liberation Sans",sans-serif;font-size:13px;color:#000}
.c-h{width:25px}.c-a{width:121px}.c-b{width:44px}.c-j{width:38px}.c-m{width:55px}.c-n{width:299px}.c-o{width:101px}.c-x{width:24px}
col{border-right:1px solid #d6d6d6}
.grid tr{border-bottom:1px solid #d6d6d6}
.grid td{padding:0;line-height:17px;overflow:visible}
.rh{height:16px}.r55{height:55px}.r37{height:37px}.r40{height:40px}.r17{height:17px}
.grid th{background:#e6e6e6;font-weight:400;color:#444;padding:0;border:1px solid #bcbcbc;border-top:0;border-left:0;line-height:15px;font-size:13px;vertical-align:bottom;overflow:hidden}
.rh th{vertical-align:middle;line-height:15px}
tbody th{border-right-color:#9c9c9c!important;border-bottom-color:#9c9c9c!important}
.corner{position:relative}
.corner i{position:absolute;right:3px;bottom:3px;width:0;height:0;border-style:solid;border-width:0 0 10px 10px;border-color:transparent transparent #b5b5b5 transparent}
.grid .hsel{background:#d2d2d2;color:#217346;border-bottom:2px solid #217346}
.grid .vsel{background:#d2d2d2;color:#217346;border-right:2px solid #217346!important}
.intro{text-align:center;vertical-align:middle;white-space:nowrap}
.clue{padding-left:2px!important;vertical-align:middle;white-space:nowrap;color:#111}
.l{text-align:center;vertical-align:middle;font-weight:700;font-size:20px;border:1px solid #000}
.num{text-align:center;vertical-align:middle;font-weight:700;font-size:14px}
.pink{background:#d5a6bd;border:1px solid #d5a6bd}
.purple{background:#b4a7d6;border:1px solid #b4a7d6}
.blue{background:#9fc5e8;border:1px solid #9fc5e8}
.orange{background:#f9cb9c;border:1px solid #f9cb9c}
.pistas{background:#d9d9d9;border:1px solid #d9d9d9;text-align:center;vertical-align:middle;font-weight:700;font-size:16px}
.selcell{position:relative}
.selcell::before{content:"";position:absolute;left:-1px;right:-1px;top:-1px;bottom:-1px;border:2px solid #217346}
.selcell::after{content:"";position:absolute;right:-3px;bottom:-3px;width:5px;height:5px;background:#217346}
.logo{display:flex;align-items:flex-start;gap:3px;padding:3px 0 0 6px;height:52px}
.logotxt{display:flex;flex-direction:column;line-height:18px}
.lp{font-family:Lato,sans-serif;font-weight:700;font-size:22px;color:#5d6b70;height:19px;padding-top:1px}
.ld{font-family:Lato,sans-serif;font-size:19px;color:#e4626a;margin-left:14px;display:flex;align-items:center;height:17px;padding-top:3px}
.tomato{width:11px;height:11px;border-radius:50%;background:#ef3a3f;margin:2px 0 0 1px}

/* scrollbars */
.vscroll{width:22px;flex:none;display:flex;flex-direction:column;align-items:center;padding:2px 0 0 2px}
.sbtn{width:14px;height:14px;background:#fff;border:1px solid #c0c0c0;display:flex;align-items:center;justify-content:center;flex:none}
.vthumb{width:14px;height:33px;background:#fff;border:1px solid #bdbdbd;margin-top:1px}
.vspace{flex:1}
.tri{width:0;height:0;display:block;border:4px solid transparent}
.tri.up{border-bottom-color:#666;border-top:0}
.tri.dn{border-top-color:#666;border-bottom:0}
.tri.lf{border-right-color:#666;border-left:0}
.tri.rt{border-left-color:#666;border-right:0}

/* sheet tabs */
.sheettabs{height:28px;background:#e6e6e6;display:flex;align-items:flex-start;border-bottom:1px solid #c9c9c9;flex:none}
.tabnav{width:100px;height:26px;display:flex;align-items:center;gap:24px;padding-left:26px;opacity:.45}
.stab{height:25px;display:flex;align-items:center;justify-content:center;white-space:nowrap;font-family:"Liberation Sans",sans-serif;font-size:13px}
.s1{width:109px;font-weight:700;color:#217346;background:linear-gradient(#fff,#b9f0bb);border-left:1px solid #aaa;border-right:1px solid #aaa;border-bottom:2px solid #217346;margin-top:-1px;height:26px}
.s2{width:179px;margin-left:3px;margin-top:3px;height:22px;background:#00ff00;color:#1d5a2e;letter-spacing:.15px}
.addsheet{width:16px;height:16px;margin:6px 0 0 36px;border:1px solid #777;border-radius:50%;color:#666;font-size:14px;line-height:13px;text-align:center}
.hdots{width:2px;height:9px;margin:9px 0 0 709px;border-left:2px dotted #aaa}
.hscroll{display:flex;width:731px;margin:7px 0 0 14px;flex:none}
.hthumb{flex:1;background:#fff;border:1px solid #bdbdbd;height:15px}
.hscroll .sbtn{height:15px}

/* status */
.status{height:22px;background:#f1f1f1;display:flex;align-items:center;padding-left:7px;color:#555;flex:none}
.views{display:flex;margin-left:auto;height:22px}
.ready{font-size:12px}
.vbtn{width:38px;height:22px;display:flex;align-items:center;justify-content:center}
.vbtn.on{background:#c6c6c6}
.zoomctl{display:flex;align-items:center;margin-left:7px;gap:4px}
.zm{width:7px;height:2px;background:#555}
.zp{width:8px;height:8px;background:linear-gradient(#555,#555) center/8px 2px no-repeat,linear-gradient(#555,#555) center/2px 8px no-repeat}
.zline{position:relative;width:100px;height:1px;background:#999}
.zthumb{position:absolute;left:48px;top:-5px;width:4px;height:11px;background:#666}
.zpct{width:45px;text-align:center;margin-left:7px;color:#666}

/* taskbar */
.taskbar{height:40px;background:#5fc5e9;border-top:1px solid #1f4e68;border-bottom:1px solid #3a7f9e;display:flex;align-items:stretch;flex:none}
.tk{display:flex;align-items:center;justify-content:center;flex:none}
.tk.active{background:#7fd2ef;border-left:1px solid #1c4a62;border-right:1px solid #1c4a62}
.start{width:50px}.srv{width:63px}.exp{width:62.500px}.chrome{width:60px}.ps{width:62px}.calc{width:64px}.app16{width:51px;background:#8ad3ec!important}
.tkstack{width:10px;border-right:2px solid #1c4a62;box-shadow:inset 3px 0 0 #7fd2ef,inset 4px 0 0 #1c4a62,inset 7px 0 0 #7fd2ef,inset 8px 0 0 #1c4a62}
.excel{width:59px}
.tray{margin-left:auto;display:flex;align-items:center;gap:9px;padding-right:19px}
.traycaret{width:0;height:0;border:4px solid transparent;border-bottom:4px solid #123;border-top:0}
.clock{display:flex;flex-direction:column;align-items:flex-end;margin-left:11px;line-height:16px;font-size:11px;color:#1f2f38;text-align:center}

/* watermark */
.watermark{position:absolute;left:1578px;top:962px;display:flex;align-items:center;gap:14px;pointer-events:none;opacity:.22}
.watermark span{font-family:Lato,sans-serif;font-weight:700;font-size:83px;color:#a0a0a0;line-height:108px;letter-spacing:1px}
```
